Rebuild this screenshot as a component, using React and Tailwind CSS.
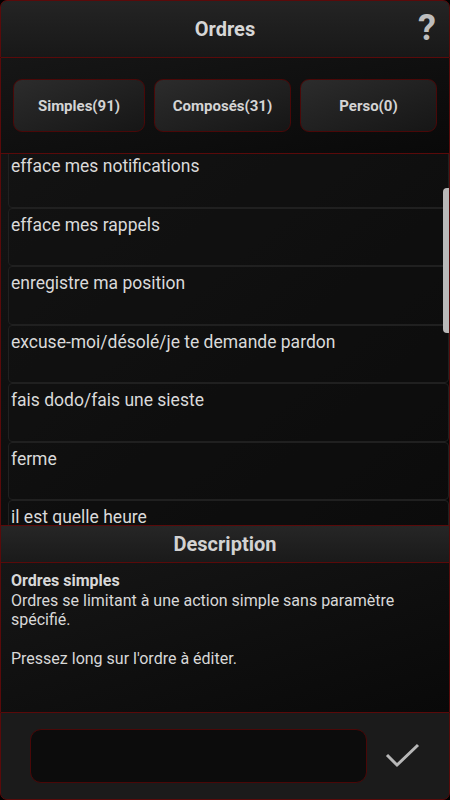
import React from "react";

const items = [
  "efface mes notifications",
  "efface mes rappels",
  "enregistre ma position",
  "excuse-moi/désolé/je te demande pardon",
  "fais dodo/fais une sieste",
  "ferme",
  "il est quelle heure",
];

function Tab({ label, w }) {
  return (
    <div
      className={`${w} h-[53px] flex items-center justify-center rounded-[9px] border border-[#4a0808] bg-gradient-to-br from-[#2c2c2c] to-[#161616] pt-[2px] text-[15px] font-bold text-[#d4d4d4]`}
    >
      {label}
    </div>
  );
}

export default function App() {
  return (
    <div
      className="w-[450px] h-[800px] bg-black flex flex-col overflow-hidden"
      style={{ fontFamily: "Roboto, 'Noto Sans', sans-serif" }}
    >
      {/* Header */}
      <div className="relative h-[58px] shrink-0 flex items-center justify-center rounded-t-[7px] border border-[#5a0a0a] bg-gradient-to-b from-[#242424] to-[#181818]">
        <span className="text-[20px] font-bold text-[#d6d6d6]">Ordres</span>
        <span className="absolute right-[13px] top-[6px] text-[36px] leading-[42px] font-bold text-[#bdbdbd]">?</span>
      </div>

      {/* Tabs */}
      <div className="h-[96px] shrink-0 flex items-center pl-[12px] gap-[9px] border-x border-b border-[#5a0a0a] bg-gradient-to-br from-[#161616] to-[#090909]">
        <Tab label="Simples(91)" w="w-[132px]" />
        <Tab label="Composés(31)" w="w-[137px]" />
        <Tab label="Perso(0)" w="w-[137px]" />
      </div>

      {/* List */}
      <div className="relative h-[371px] shrink-0 overflow-hidden border-x border-[#5a0a0a] bg-gradient-to-br from-[#141414] to-[#080808]">
        <div className="flex flex-col -mt-[5px] pl-[7px]">
          {items.map((t) => (
            <div
              key={t}
              className="h-[58.5px] shrink-0 rounded-[4px] border border-[#202020] bg-[#121212]/40 pl-[2px] pt-[5px] text-[17.5px] leading-[23px] text-[#dadada]"
            >
              {t}
            </div>
          ))}
        </div>
        <div className="absolute right-0 top-[34px] w-[6px] h-[145px] rounded-l-[4px] bg-[#b9b9b9]" />
      </div>

      {/* Description header */}
      <div className="h-[38px] shrink-0 flex items-center justify-center border border-[#5a0a0a] bg-gradient-to-b from-[#262626] to-[#1a1a1a]">
        <span className="text-[20px] font-bold text-[#d2d2d2]">Description</span>
      </div>

      {/* Description body */}
      <div className="h-[149px] shrink-0 border-x border-[#5a0a0a] bg-gradient-to-br from-[#161616] to-[#090909] px-[10px] pt-[8px] text-[16px] leading-[19.5px] text-[#d8d8d8]">
        <div className="font-bold">Ordres simples</div>
        <div>Ordres se limitant à une action simple sans paramètre spécifié.</div>
        <div className="h-[19.5px]" />
        <div>Pressez long sur l'ordre à éditer.</div>
      </div>

      {/* Bottom bar */}
      <div className="flex-1 flex items-center rounded-b-[7px] border border-[#5a0a0a] bg-[#1b1b1b] pl-[29px]">
        <div className="w-[337px] h-[54px] rounded-[11px] border border-[#4a0808] bg-[#0c0c0c]" />
        <svg width="36" height="28" viewBox="0 0 36 28" className="ml-[18px]">
          <path d="M2 13 L12 23 L33 3" fill="none" stroke="#b8b8b8" strokeWidth="3" />
        </svg>
      </div>
    </div>
  );
}
